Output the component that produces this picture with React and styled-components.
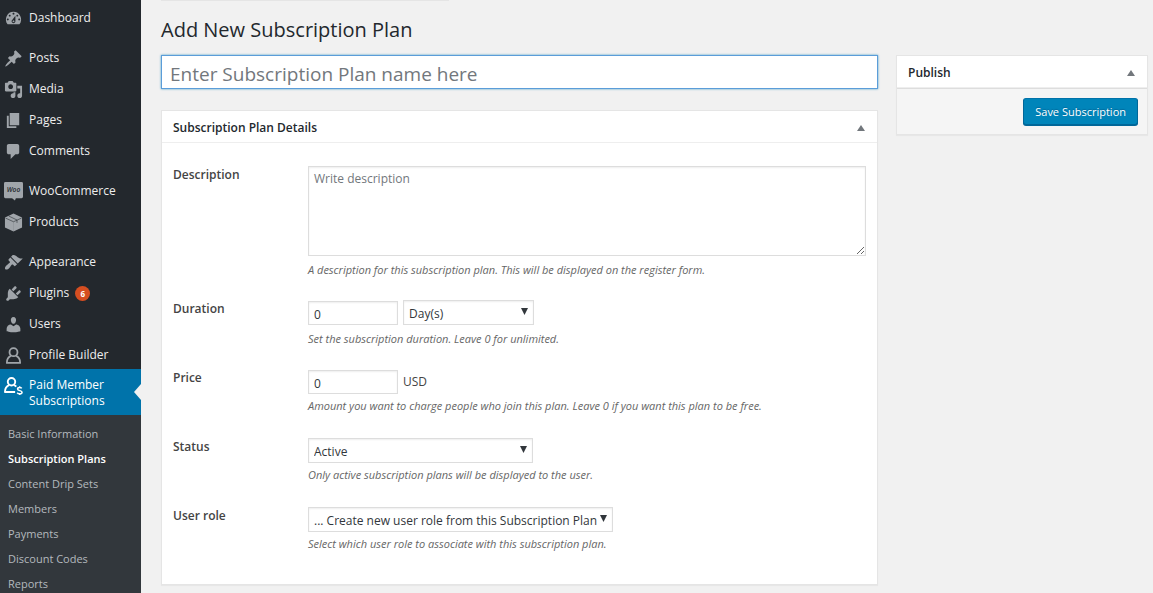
import React from 'react';
import styled, { createGlobalStyle } from 'styled-components';

const GlobalStyle = createGlobalStyle`
  * {
    box-sizing: border-box;
  }
  body {
    margin: 0;
    background: #f1f1f1;
    color: #444;
    font-family: 'Open Sans', 'Noto Sans', sans-serif;
    font-size: 12px;
    line-height: 20px;
  }
  input,
  select,
  textarea,
  button {
    font-family: inherit;
  }
`;

const Layout = styled.div`
  display: flex;
  align-items: flex-start;
  min-height: 100vh;
`;

const Sidebar = styled.nav`
  flex: 0 0 141px;
  height: 100vh;
  position: sticky;
  top: 0;
  overflow: hidden;
  padding-top: 1px;
  background: #23282d;
`;

const MenuList = styled.ul`
  list-style: none;
  margin: 0 0 9px;
  padding: 0;
`;

const MenuLink = styled.a`
  position: relative;
  display: flex;
  align-items: ${(props) => (props.$current ? 'flex-start' : 'center')};
  gap: 6px;
  min-height: ${(props) => (props.$current ? 46 : 31)}px;
  padding: ${(props) => (props.$current ? '8px 4px 6px' : '3px 4px 0')};
  background: ${(props) => (props.$current ? '#0073aa' : 'transparent')};
  color: ${(props) => (props.$current ? '#fff' : '#eee')};
  font-size: 12px;
  line-height: 16px;
  text-decoration: none;
  svg {
    flex: none;
    color: ${(props) => (props.$current ? '#fff' : '#a0a5aa')};
  }
  &::after {
    content: '';
    display: ${(props) => (props.$current ? 'block' : 'none')};
    position: absolute;
    right: 0;
    top: 15px;
    border: solid 8px transparent;
    border-left: 0;
    border-right: solid 7px #f1f1f1;
  }
`;

const Badge = styled.span`
  min-width: 15px;
  height: 15px;
  border-radius: 8px;
  background: #d54e21;
  color: #fff;
  font-size: 8px;
  font-weight: 700;
  line-height: 15px;
  text-align: center;
`;

const SubMenu = styled.ul`
  list-style: none;
  margin: 0;
  padding: 6px 0;
  background: #32373c;
`;

const SubLink = styled.a`
  display: block;
  padding: 0 8px;
  color: ${(props) => (props.$current ? '#fff' : '#b4b9be')};
  font-size: 11px;
  font-weight: ${(props) => (props.$current ? 600 : 400)};
  line-height: 25px;
  white-space: nowrap;
  text-decoration: none;
`;

const Content = styled.main`
  flex: 1;
  min-width: 0;
  padding: 0 5px 8px 20px;
`;

const MetaEdge = styled.div`
  width: 288px;
  height: 1px;
  background: #e5e5e5;
`;

const PageTitle = styled.h1`
  margin: 0;
  padding: 14px 0 10px;
  color: #23282d;
  font-size: 20px;
  font-weight: 400;
  line-height: 30px;
`;

const Columns = styled.div`
  display: grid;
  grid-template-columns: minmax(0, 1fr) 252px;
  gap: 18px;
  align-items: start;
`;

const NameInput = styled.input`
  display: block;
  width: 100%;
  height: 34px;
  margin-bottom: 21px;
  padding: 4px 8px 1px;
  border: solid 1px #5b9dd9;
  background: #fff;
  box-shadow: 0 0 2px rgba(30, 140, 190, 0.8);
  color: #32373c;
  font-size: 19px;
  outline: none;
  &::placeholder {
    color: #72777c;
  }
`;

const Panel = styled.section`
  border: solid 1px #e5e5e5;
  background: #fff;
  box-shadow: 0 1px 1px rgba(0, 0, 0, 0.04);
`;

const PanelHeader = styled.header`
  display: flex;
  align-items: center;
  justify-content: space-between;
  height: 32px;
  padding: 2px 12px 0 11px;
  border-bottom: solid 1px #eee;
`;

const PanelTitle = styled.h2`
  margin: 0;
  color: #23282d;
  font-size: 12px;
  font-weight: 600;
`;

const ToggleButton = styled.button`
  display: flex;
  padding: 0;
  border: 0;
  background: none;
  color: #72777c;
`;

const PanelBody = styled.div`
  padding: 23px 11px 8px;
`;

const FieldRow = styled.div`
  display: grid;
  grid-template-columns: 135px minmax(0, 1fr);
  align-items: start;
  min-height: 69px;
  padding-bottom: ${(props) => (props.$tall ? 20 : 0)}px;
`;

const FieldLabel = styled.label`
  font-weight: 600;
  line-height: 18px;
`;

const Controls = styled.div`
  display: flex;
  align-items: flex-end;
  gap: 5px;
  height: 25px;
`;

const Unit = styled.span`
  align-self: center;
`;

const Hint = styled.p`
  margin: ${(props) => props.$gap || 2}px 0 0;
  color: #666;
  font-size: 11px;
  font-style: italic;
`;

const TextArea = styled.textarea`
  display: block;
  width: 100%;
  height: 90px;
  padding: 2px 5px;
  border: solid 1px #ddd;
  box-shadow: inset 0 1px 2px rgba(0, 0, 0, 0.07);
  font-size: 12px;
  line-height: 20px;
  &::placeholder {
    color: #72777c;
  }
`;

const NumberInput = styled.input`
  width: 90px;
  height: 24px;
  padding: 3px 5px 1px;
  border: solid 1px #ddd;
  box-shadow: inset 0 1px 2px rgba(0, 0, 0, 0.07);
  color: #32373c;
  font-size: 12px;
`;

const SelectWrap = styled.span`
  position: relative;
  display: block;
  width: ${(props) => props.$width}px;
  svg {
    position: absolute;
    right: 6px;
    top: 8px;
    color: #32373c;
    pointer-events: none;
  }
`;

const Select = styled.select`
  display: block;
  width: 100%;
  height: 25px;
  padding: 1px 12px 0 5px;
  appearance: none;
  border: solid 1px #ddd;
  border-radius: 0;
  background: #fff;
  box-shadow: inset 0 1px 2px rgba(0, 0, 0, 0.07);
  color: #32373c;
  font-size: 12px;
`;

const PublishActions = styled.div`
  display: flex;
  justify-content: flex-end;
  padding: 9px;
  border-top: solid 1px #ddd;
  background: #f5f5f5;
`;

const PrimaryButton = styled.button`
  height: 27px;
  padding: 0 11px;
  border: solid 1px #006799;
  border-color: #0073aa #006799 #006799;
  border-radius: 3px;
  background: #0085ba;
  box-shadow: 0 1px 0 #006799;
  color: #fff;
  font-size: 11px;
  text-shadow: 0 -1px 1px #006799;
  white-space: nowrap;
`;

const paths = {
  dashboard:
    'M3.76 16h12.48A7.998 7.998 0 0 0 10 3a7.998 7.998 0 0 0-6.24 13zM10 4c.55 0 1 .45 1 1s-.45 1-1 1-1-.45-1-1 .45-1 1-1zM6 6c.55 0 1 .45 1 1s-.45 1-1 1-1-.45-1-1 .45-1 1-1zm8 0c.55 0 1 .45 1 1s-.45 1-1 1-1-.45-1-1 .45-1 1-1zm-5.37 5.55L12 7v6c0 1.1-.9 2-2 2s-2-.9-2-2c0-.57.24-1.08.63-1.45zM4 10c.55 0 1 .45 1 1s-.45 1-1 1-1-.45-1-1 .45-1 1-1zm12 0c.55 0 1 .45 1 1s-.45 1-1 1-1-.45-1-1 .45-1 1-1zm-5 3c0-.55-.45-1-1-1s-1 .45-1 1 .45 1 1 1 1-.45 1-1z',
  posts:
    'M10.44 3.02l1.82-1.82 6.36 6.35-1.83 1.82c-1.05-.68-2.48-.57-3.41.36l-.75.75c-.92.93-1.04 2.35-.35 3.41l-1.83 1.82-2.41-2.41-2.8 2.79c-.42.42-3.38 2.71-3.8 2.29s1.86-3.39 2.28-3.81l2.79-2.79L4.1 9.36l1.83-1.82c1.05.69 2.48.57 3.4-.36l.75-.75c.93-.92 1.05-2.35.36-3.41z',
  media:
    'M13 11V4c0-.55-.45-1-1-1h-1.67L9 1H5L3.67 3H2c-.55 0-1 .45-1 1v7c0 .55.45 1 1 1h10c.55 0 1-.45 1-1zM7 4.5c1.38 0 2.5 1.12 2.5 2.5S8.38 9.5 7 9.5 4.5 8.38 4.5 7 5.62 4.5 7 4.5zM14 6h5v10.5c0 1.38-1.12 2.5-2.5 2.5S14 17.88 14 16.5s1.12-2.5 2.5-2.5c.17 0 .34.02.5.05V9h-3V6zm-4 8.05V13h2v3.5c0 1.38-1.12 2.5-2.5 2.5S7 17.88 7 16.5 8.12 14 9.5 14c.17 0 .34.02.5.05z',
  pages: 'M6 15V2h10v13H6zm-1 1h8v2H3V5h2v11z',
  comments:
    'M5 2h9c1.1 0 2 .9 2 2v7c0 1.1-.9 2-2 2h-2l-5 5v-5H5c-1.1 0-2-.9-2-2V4c0-1.1.9-2 2-2z',
  appearance:
    'M14.48 11.06L7.41 3.99l1.5-1.5c.5-.56 2.3-.47 3.51.32 1.21.8 1.43 1.28 2.91 2.1 1.18.64 2.45 1.26 4.45.85zm-.71.71L6.7 4.7 4.93 6.47c-.39.39-.39 1.02 0 1.41l1.06 1.06c.39.39.39 1.03 0 1.42-.6.6-1.43 1.11-2.21 1.69-.35.26-.7.53-1.01.84C1.43 14.23.4 16.08 1.4 17.07c.99 1 2.84-.03 4.18-1.36.31-.31.58-.66.85-1.02.57-.78 1.08-1.61 1.69-2.21.39-.39 1.02-.39 1.41 0l1.06 1.06c.39.39 1.02.39 1.41 0z',
  plugins:
    'M13.11 4.36L9.87 7.6 8 5.73l3.24-3.24c.35-.34 1.05-.2 1.56.32.52.51.66 1.21.31 1.55zm-8 1.77l.91-1.12 9.01 9.01-1.19.84c-.71.71-2.63 1.16-3.82 1.16H6.14L4.9 17.26c-.59.59-1.54.59-2.12 0-.59-.58-.59-1.53 0-2.12l1.24-1.24v-3.88c0-1.13.4-3.19 1.09-3.89zm7.26 3.97l3.24-3.24c.34-.35 1.04-.21 1.55.31.52.51.66 1.21.31 1.55l-3.24 3.25z',
  users:
    'M10 9.25c-2.27 0-2.73-3.44-2.73-3.44C7 4.02 7.82 2 9.97 2c2.16 0 2.98 2.02 2.71 3.81 0 0-.41 3.44-2.68 3.44zm0 2.57L12.72 10c2.39 0 4.52 2.33 4.52 4.53v2.49s-3.65 1.13-7.24 1.13c-3.65 0-7.24-1.13-7.24-1.13v-2.49c0-2.25 1.94-4.48 4.47-4.48z',
};

// icons that need strokes or more than one colour
const drawings = {
  woo: (
    <>
      <path
        fill="currentColor"
        d="M1.500 0h17A1.500 1.500 0 0 1 20 1.500v14a1.500 1.500 0 0 1-1.500 1.500H12.500l-1 2.500L8.500 17h-7A1.500 1.500 0 0 1 0 15.500v-14A1.500 1.500 0 0 1 1.500 0z"
      />
      <text
        x="10"
        y="11"
        fill="#23282d"
        fontFamily="Open Sans, sans-serif"
        fontSize="7"
        fontStyle="italic"
        fontWeight="600"
        textAnchor="middle"
      >
        Woo
      </text>
    </>
  ),
  products: (
    <>
      <path fill="currentColor" d="M10 .5l9 4.300v10.400L10 19.500l-9-4.300V4.800z" />
      <g fill="none" stroke="#23282d" strokeWidth="0.6">
        <path d="M1.500 5.300L10 9.200l8.500-3.900" />
        <path d="M5 3.200l8.700 4.200v3" />
      </g>
      <path d="M10 9.200v10" stroke="#23282d" strokeWidth="0.5" strokeOpacity="0.2" />
    </>
  ),
  profile: (
    <g fill="none" stroke="currentColor" strokeWidth="1.900" strokeLinejoin="round">
      <circle cx="10" cy="6.500" r="4.200" />
      <path d="M7.200 10.300C4.400 11.400 3 13.500 3 17.800h14c0-4.300-1.400-6.400-4.200-7.500" />
    </g>
  ),
  member: (
    <g fill="none" stroke="currentColor" strokeWidth="2" strokeLinejoin="round">
      <circle cx="7.900" cy="5" r="3.900" />
      <path d="M5.300 8.500C2.500 9.600 1 11.800 1 15.800h10.700M10.500 8.500c1 .4 1.800.9 2.400 1.600" />
      <path
        strokeWidth="1.600"
        d="M18.700 12c-.5-.7-1.300-1-2.200-1-1.400 0-2.200.7-2.200 1.600 0 2.300 4.700 1.200 4.700 3.400 0 1.100-1 1.700-2.500 1.700-1.100 0-2-.4-2.600-1.200M16.500 9.800v1.200M16.500 17.700v1.200"
      />
    </g>
  ),
};

const MenuIcon = ({ name }) => (
  <svg width="19" height="19" viewBox="0 0 20 20" aria-hidden="true">
    {drawings[name] || (
      <path fill="currentColor" fillRule="evenodd" d={paths[name]} />
    )}
  </svg>
);

const menuGroups = [
  [{ label: 'Dashboard', icon: 'dashboard' }],
  [
    { label: 'Posts', icon: 'posts' },
    { label: 'Media', icon: 'media' },
    { label: 'Pages', icon: 'pages' },
    { label: 'Comments', icon: 'comments' },
  ],
  [
    { label: 'WooCommerce', icon: 'woo' },
    { label: 'Products', icon: 'products' },
  ],
  [
    { label: 'Appearance', icon: 'appearance' },
    { label: 'Plugins', icon: 'plugins', count: 6 },
    { label: 'Users', icon: 'users' },
    { label: 'Profile Builder', icon: 'profile' },
    {
      label: 'Paid Member Subscriptions',
      icon: 'member',
      current: true,
      children: [
        'Basic Information',
        'Subscription Plans',
        'Content Drip Sets',
        'Members',
        'Payments',
        'Discount Codes',
        'Reports',
      ],
    },
  ],
];

const AdminMenu = () => (
  <Sidebar aria-label="Main menu">
    {menuGroups.map((group) => (
      <MenuList key={group[0].label}>
        {group.map((item) => (
          <li key={item.label}>
            <MenuLink href="#" $current={item.current}>
              <MenuIcon name={item.icon} />
              <span>{item.label}</span>
              {item.count && <Badge>{item.count}</Badge>}
            </MenuLink>
            {item.children && (
              <SubMenu>
                {item.children.map((child) => (
                  <li key={child}>
                    <SubLink href="#" $current={child === 'Subscription Plans'}>
                      {child}
                    </SubLink>
                  </li>
                ))}
              </SubMenu>
            )}
          </li>
        ))}
      </MenuList>
    ))}
  </Sidebar>
);

const PanelHead = ({ title }) => (
  <PanelHeader>
    <PanelTitle>{title}</PanelTitle>
    <ToggleButton type="button" aria-label={`Toggle panel: ${title}`}>
      <svg width="8" height="6" viewBox="0 0 8 6" aria-hidden="true">
        <path fill="currentColor" d="M4 0l4 6H0z" />
      </svg>
    </ToggleButton>
  </PanelHeader>
);

const SelectBox = ({ id, width, label, option }) => (
  <SelectWrap $width={width}>
    <Select id={id} aria-label={label}>
      <option>{option}</option>
    </Select>
    <svg width="7" height="7" viewBox="0 0 7 7" aria-hidden="true">
      <path fill="currentColor" d="M0 0h7L3.500 7z" />
    </svg>
  </SelectWrap>
);

const Field = ({ id, label, hint, hintGap, tall, children }) => (
  <FieldRow $tall={tall}>
    <FieldLabel htmlFor={id}>{label}</FieldLabel>
    <div>
      {children}
      <Hint $gap={hintGap}>{hint}</Hint>
    </div>
  </FieldRow>
);

const App = () => {
  return (
    <>
      <GlobalStyle />
      <Layout>
        <AdminMenu />
        <Content>
          <MetaEdge />
          <PageTitle>Add New Subscription Plan</PageTitle>
          <Columns>
            <div>
              <NameInput
                type="text"
                aria-label="Subscription Plan name"
                placeholder="Enter Subscription Plan name here"
              />
              <Panel>
                <PanelHead title="Subscription Plan Details" />
                <PanelBody>
                  <Field
                    id="description"
                    label="Description"
                    hint="A description for this subscription plan. This will be displayed on the register form."
                    hintGap={4}
                    tall
                  >
                    <TextArea id="description" placeholder="Write description" />
                  </Field>
                  <Field
                    id="duration"
                    label="Duration"
                    hint="Set the subscription duration. Leave 0 for unlimited."
                    hintGap={4}
                  >
                    <Controls>
                      <NumberInput id="duration" type="text" defaultValue="0" />
                      <SelectBox width={131} label="Duration unit" option="Day(s)" />
                    </Controls>
                  </Field>
                  <Field
                    id="price"
                    label="Price"
                    hint="Amount you want to charge people who join this plan. Leave 0 if you want this plan to be free."
                  >
                    <Controls>
                      <NumberInput id="price" type="text" defaultValue="0" />
                      <Unit>USD</Unit>
                    </Controls>
                  </Field>
                  <Field
                    id="status"
                    label="Status"
                    hint="Only active subscription plans will be displayed to the user."
                  >
                    <SelectBox id="status" width={225} option="Active" />
                  </Field>
                  <Field
                    id="role"
                    label="User role"
                    hint="Select which user role to associate with this subscription plan."
                  >
                    <SelectBox
                      id="role"
                      width={305}
                      option="... Create new user role from this Subscription Plan"
                    />
                  </Field>
                </PanelBody>
              </Panel>
            </div>
            <Panel>
              <PanelHead title="Publish" />
              <PublishActions>
                <PrimaryButton type="button">Save Subscription</PrimaryButton>
              </PublishActions>
            </Panel>
          </Columns>
        </Content>
      </Layout>
    </>
  );
};

export default App;
